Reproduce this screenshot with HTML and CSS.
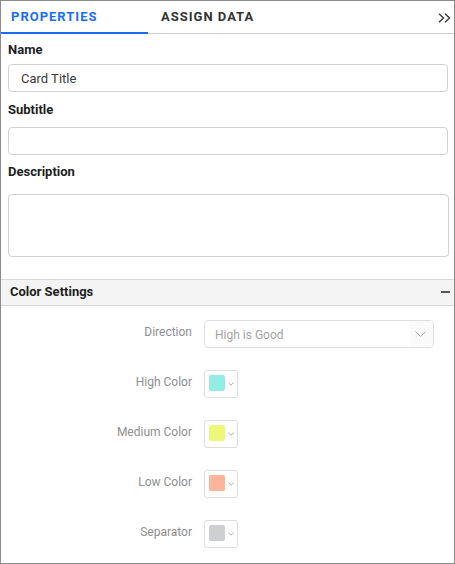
FILE: index.html
```html
<!DOCTYPE html>
<html>
<head>
<meta charset="utf-8">
<link rel="stylesheet" href="styles.css">
</head>
<body>
<div class="panel">
  <div class="tabs">
    <div class="tab tab-active">PROPERTIES</div>
    <div class="tab tab-second">ASSIGN DATA</div>
    <div class="collapse">
      <svg width="13" height="10" viewBox="0 0 13 10"><path d="M1 0.8 L5.5 5 L1 9.2 M7 0.8 L11.5 5 L7 9.2" fill="none" stroke="#3d3d3d" stroke-width="1.4"/></svg>
    </div>
  </div>

  <div class="fields">
    <div class="field-label label-name">Name</div>
    <div class="text-box box-name">Card Title</div>
    <div class="field-label label-sub">Subtitle</div>
    <div class="text-box box-sub"></div>
    <div class="field-label label-desc">Description</div>
    <div class="text-area"></div>
  </div>

  <div class="section-head">
    <span class="section-title">Color Settings</span>
    <span class="minus"></span>
  </div>

  <div class="settings">
    <div class="row">
      <span class="row-label">Direction</span>
      <div class="select">
        <span class="select-text">High is Good</span>
        <span class="select-arrow">
          <svg width="11" height="6" viewBox="0 0 11 6"><path d="M0.5 0.5 L5.5 5.3 L10.5 0.5" fill="none" stroke="#a8a8a8" stroke-width="1"/></svg>
        </span>
      </div>
    </div>
    <div class="row">
      <span class="row-label">High Color</span>
      <div class="swatch-btn">
        <span class="swatch swatch-high"></span>
        <svg class="mini-arrow" width="6" height="4" viewBox="0 0 6 4"><path d="M0.5 0.5 L3 3.2 L5.5 0.5" fill="none" stroke="#a8a8a8" stroke-width="0.9"/></svg>
      </div>
    </div>
    <div class="row">
      <span class="row-label">Medium Color</span>
      <div class="swatch-btn">
        <span class="swatch swatch-medium"></span>
        <svg class="mini-arrow" width="6" height="4" viewBox="0 0 6 4"><path d="M0.5 0.5 L3 3.2 L5.5 0.5" fill="none" stroke="#a8a8a8" stroke-width="0.9"/></svg>
      </div>
    </div>
    <div class="row">
      <span class="row-label">Low Color</span>
      <div class="swatch-btn">
        <span class="swatch swatch-low"></span>
        <svg class="mini-arrow" width="6" height="4" viewBox="0 0 6 4"><path d="M0.5 0.5 L3 3.2 L5.5 0.5" fill="none" stroke="#a8a8a8" stroke-width="0.9"/></svg>
      </div>
    </div>
    <div class="row">
      <span class="row-label">Separator</span>
      <div class="swatch-btn">
        <span class="swatch swatch-sep"></span>
        <svg class="mini-arrow" width="6" height="4" viewBox="0 0 6 4"><path d="M0.5 0.5 L3 3.2 L5.5 0.5" fill="none" stroke="#a8a8a8" stroke-width="0.9"/></svg>
      </div>
    </div>
  </div>
</div>
</body>
</html>
```

FILE: styles.css
```css
* { box-sizing: border-box; }

html, body {
  margin: 0;
  padding: 0;
  background: #ffffff;
}

body {
  font-family: Roboto, "Liberation Sans", Arial, sans-serif;
}

.panel {
  width: 455px;
  height: 564px;
  border: 1px solid #8c8c8c;
  background: #ffffff;
  overflow: hidden;
}

/* Tabs */
.tabs {
  display: flex;
  height: 33px;
  border-bottom: 1px solid #cfcfcf;
}

.tab {
  height: 33px;
  margin-bottom: -1px;
  padding-top: 8px;
  font-size: 13px;
  line-height: 16px;
  font-weight: 700;
  letter-spacing: 1px;
  color: #333333;
}

.tab-active {
  width: 147px;
  padding-left: 10px;
  color: #1c6cf2;
  border-bottom: 2px solid #1c6cf2;
}

.tab-second {
  padding-left: 13px;
}

.collapse {
  margin-left: auto;
  margin-right: 3px;
  padding-top: 12px;
}

.collapse svg { display: block; }

/* Fields */
.fields {
  padding: 0 6px 0 7px;
  display: flex;
  flex-direction: column;
}

.field-label {
  font-size: 13px;
  line-height: 16px;
  font-weight: 700;
  color: #1e1e1e;
}

.label-name { margin-top: 8px; }
.label-sub { margin-top: 10px; }
.label-desc { margin-top: 9px; }

.text-box {
  height: 28px;
  border: 1px solid #d2d2d2;
  border-radius: 4px;
  padding-left: 12px;
  font-size: 13px;
  line-height: 27px;
  color: #3a3a3a;
}

.box-name { margin-top: 6px; }
.box-sub { margin-top: 9px; }

.text-area {
  margin-top: 14px;
  width: 441px;
  height: 63px;
  border: 1px solid #d2d2d2;
  border-radius: 4px;
}

/* Section header */
.section-head {
  margin-top: 22px;
  height: 27px;
  background: #f4f4f4;
  border-top: 1px solid #d8d8d8;
  border-bottom: 1px solid #d8d8d8;
  display: flex;
  align-items: flex-start;
  padding: 4px 4px 0 9px;
}

.section-title {
  font-size: 13px;
  line-height: 16px;
  font-weight: 700;
  color: #1e1e1e;
}

.minus {
  margin-left: auto;
  margin-top: 7px;
  width: 9px;
  height: 1.5px;
  background: #555555;
}

/* Settings */
.settings {
  padding-top: 14px;
  display: flex;
  flex-direction: column;
  gap: 22px;
}

.row {
  display: grid;
  grid-template-columns: 191px 1fr;
  column-gap: 12px;
  align-items: start;
}

.row-label {
  text-align: right;
  font-size: 12px;
  line-height: 17px;
  padding-top: 4px;
  color: #8e8e8e;
}

.select {
  width: 230px;
  height: 28px;
  border: 1px solid #dedede;
  border-radius: 4px;
  display: flex;
  overflow: hidden;
}

.select-text {
  flex: 1;
  padding-left: 10px;
  padding-top: 6px;
  font-size: 12px;
  line-height: 16px;
  color: #a3a3a3;
}

.select-arrow {
  width: 23px;
  background: #fafafa;
  display: flex;
  align-items: flex-start;
  padding-top: 10px;
  padding-left: 5px;
}

.select-arrow svg { display: block; }

.swatch-btn {
  width: 34px;
  height: 28px;
  border: 1px solid #dedede;
  border-radius: 3px;
  display: flex;
  align-items: flex-start;
  padding: 4px 0 0 4px;
}

.swatch {
  width: 16px;
  height: 16px;
  border-radius: 2px;
}

.mini-arrow {
  display: block;
  margin-top: 7px;
  margin-left: 3px;
}

.swatch-high { background: #94ede3; }
.swatch-medium { background: #eff77a; }
.swatch-low { background: #ffb39b; }
.swatch-sep { background: #cdcfd3; }
```
